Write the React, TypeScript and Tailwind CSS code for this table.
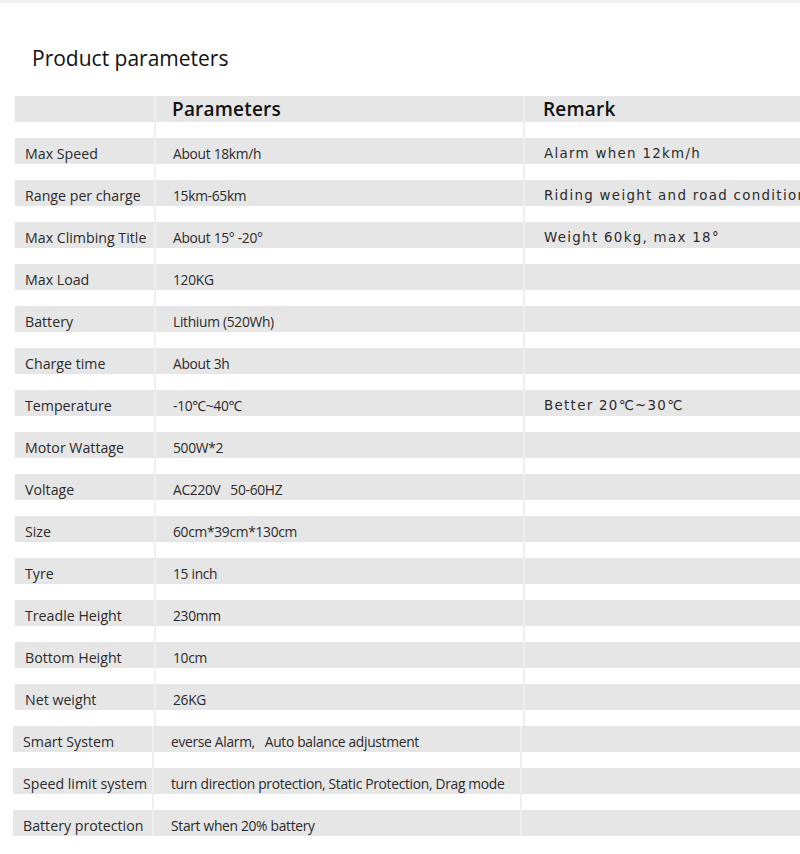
import React from "react";

type Row = { label: string; value: string; remark?: string };

const rows: Row[] = [
  { label: "Max Speed", value: "About 18km/h", remark: "Alarm when 12km/h" },
  { label: "Range per charge", value: "15km-65km", remark: "Riding weight and road condition" },
  { label: "Max Climbing Title", value: "About 15° -20°", remark: "Weight 60kg, max 18°" },
  { label: "Max Load", value: "120KG" },
  { label: "Battery", value: "Lithium (520Wh)" },
  { label: "Charge time", value: "About 3h" },
  { label: "Temperature", value: "-10℃~40℃", remark: "Better 20℃~30℃" },
  { label: "Motor Wattage", value: "500W*2" },
  { label: "Voltage", value: "AC220V\u00a0\u00a0 50-60HZ" },
  { label: "Size", value: "60cm*39cm*130cm" },
  { label: "Tyre", value: "15 inch" },
  { label: "Treadle Height", value: "230mm" },
  { label: "Bottom Height", value: "10cm" },
  { label: "Net weight", value: "26KG" },
  { label: "Smart System", value: "everse Alarm,\u00a0\u00a0 Auto balance adjustment" },
  { label: "Speed limit system", value: "turn direction protection, Static Protection, Drag mode" },
  { label: "Battery protection", value: "Start when 20% battery" },
];

const sans = { fontFamily: '"Open Sans", "Noto Sans", sans-serif' };
const remarkFont = { fontFamily: '"DejaVu Sans", "Verdana", sans-serif' };

function TableRow({ row, shifted, last }: { row: Row; shifted: boolean; last: boolean }) {
  return (
    <div className={`flex ${last ? "h-[26px]" : "h-[42px]"} ${shifted ? "-ml-[2px]" : ""}`}>
      <div className="w-[139px] shrink-0">
        <div className="h-[26px] bg-[#e6e6e6] pl-[10px] pt-[3px] text-[14.2px] leading-[26px] text-[#2b2b2b] whitespace-nowrap" style={sans}>
          {row.label}
        </div>
      </div>
      <div className={`${shifted ? "w-[368px]" : "w-[369px]"} shrink-0 border-l-2 border-[#efefef]`}>
        <div className="h-[26px] bg-[#e6e6e6] pl-[17px] pt-[3px] text-[13.8px] tracking-[-0.3px] leading-[26px] text-[#2b2b2b] whitespace-nowrap" style={sans}>
          {row.value}
        </div>
      </div>
      <div className="flex-1 border-l-2 border-[#efefef] min-w-0">
        <div className="h-[26px] bg-[#e6e6e6] pl-[19px] pt-[3px] text-[13.4px] tracking-[1.3px] leading-[26px] text-[#2b2b2b] whitespace-nowrap overflow-hidden" style={remarkFont}>
          {row.remark ?? ""}
        </div>
      </div>
    </div>
  );
}

export default function App() {
  return (
    <div className="w-[800px] h-[854px] bg-white overflow-hidden">
      <div className="h-[3px] bg-[#f0f0f0]" />
      <div className="pl-[32px] pt-[41px] h-[76px] text-[21px] leading-[28px] text-[#111]" style={sans}>
        Product parameters
      </div>
      <div className="pt-[17px] pl-[15px]">
        <div className="flex h-[42px]">
          <div className="w-[139px] shrink-0">
            <div className="h-[26px] bg-[#e6e6e6]" />
          </div>
          <div className="w-[369px] shrink-0 border-l-2 border-[#efefef]">
            <div className="h-[26px] bg-[#e6e6e6] pl-[16px] text-[19px] tracking-[0.2px] font-semibold leading-[26px] text-[#111]" style={sans}>
              Parameters
            </div>
          </div>
          <div className="flex-1 border-l-2 border-[#efefef]">
            <div className="h-[26px] bg-[#e6e6e6] pl-[18px] text-[19px] tracking-[0.2px] font-semibold leading-[26px] text-[#111]" style={sans}>
              Remark
            </div>
          </div>
        </div>
        {rows.map((r, i) => (
          <TableRow key={r.label} row={r} shifted={i >= 14} last={i === rows.length - 1} />
        ))}
      </div>
    </div>
  );
}
